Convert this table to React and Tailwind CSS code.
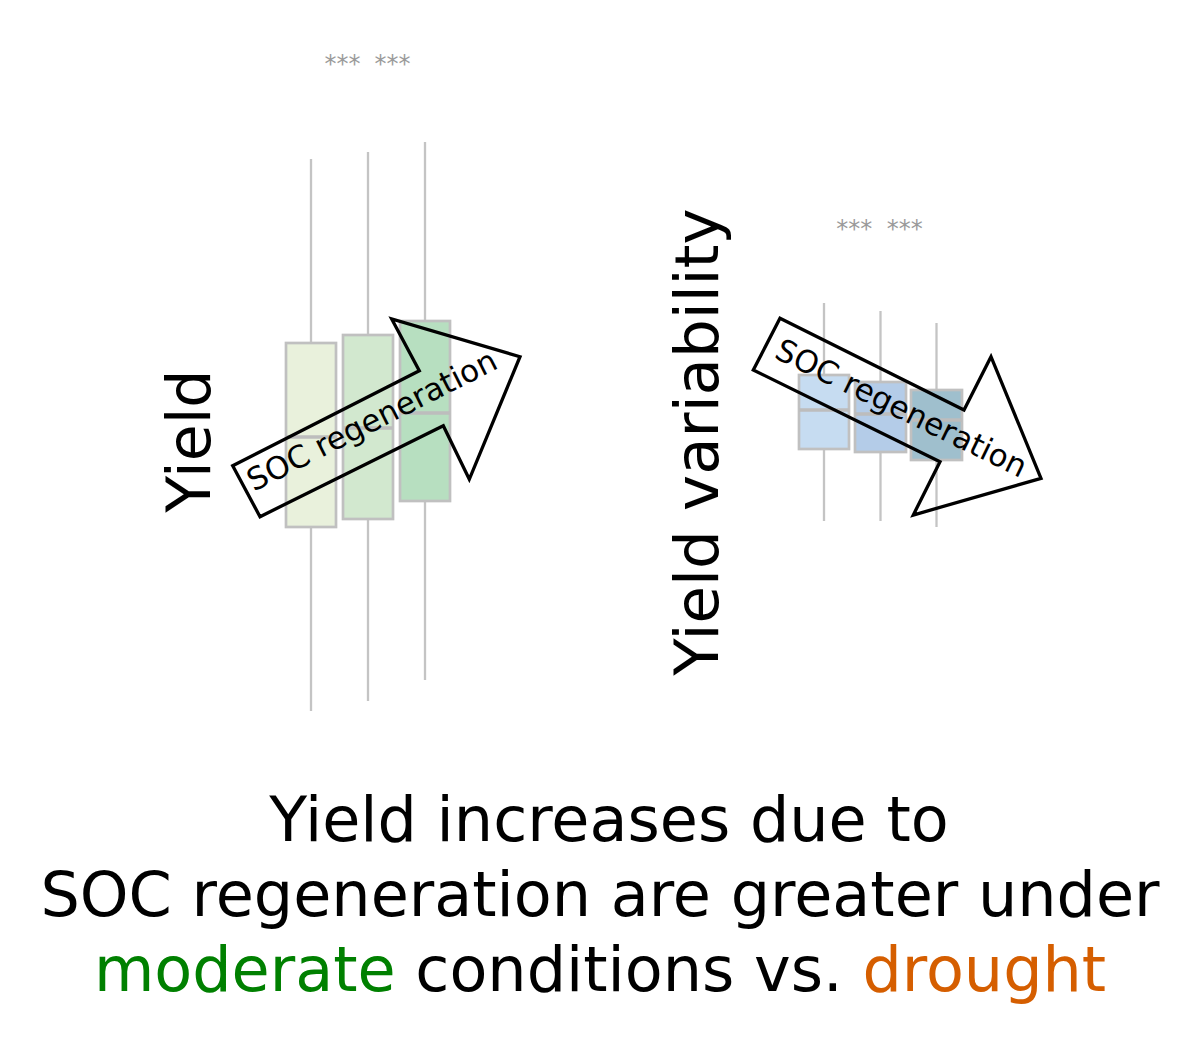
import React from 'react';

const leftBoxes = [
  { x: 286, w: 50, top: 343, bottom: 527, median: 437, wTop: 159, wBottom: 711, fill: '#e9f1dc' },
  { x: 343, w: 50, top: 335, bottom: 519, median: 428, wTop: 152, wBottom: 701, fill: '#d2e8cf' },
  { x: 400, w: 50, top: 321, bottom: 501, median: 413, wTop: 142, wBottom: 680, fill: '#b7dfc0' },
];

const rightBoxes = [
  { x: 799, w: 50, top: 375, bottom: 449, median: 410, wTop: 303, wBottom: 521, fill: '#c6dcf1' },
  { x: 855, w: 51, top: 382, bottom: 452, median: 414, wTop: 311, wBottom: 521, fill: '#b4cce8' },
  { x: 911, w: 51, top: 390, bottom: 460, median: 420, wTop: 323, wBottom: 527, fill: '#9fbfcd' },
];

const Box = ({ b }) => {
  const cx = b.x + b.w / 2;
  return (
    <g>
      <line x1={cx} y1={b.wTop} x2={cx} y2={b.wBottom} stroke="#c4c4c4" strokeWidth="2.3" />
      <rect x={b.x} y={b.top} width={b.w} height={b.bottom - b.top} fill={b.fill} stroke="#c0c0c0" strokeWidth="2.7" />
      <line x1={b.x} y1={b.median} x2={b.x + b.w} y2={b.median} stroke="#bdbdbd" strokeWidth="3.5" />
    </g>
  );
};

const Stars = ({ x, y }) => (
  <text x={x} y={y} textAnchor="middle" fontSize="24" fill="#9a9a9a" fontFamily="'DejaVu Sans', sans-serif">
    ***
  </text>
);

const App = () => {
  return (
    <div className="w-[1200px] h-[1041px] bg-white flex flex-col overflow-hidden font-['DejaVu_Sans',sans-serif]">
      <svg width="1200" height="782" viewBox="0 0 1200 782" className="block shrink-0">
        {/* left panel: yield */}
        <Stars x={342.5} y={72} />
        <Stars x={392.5} y={72} />
        {leftBoxes.map((b, i) => (
          <Box key={i} b={b} />
        ))}
        <polygon
          points="260,516.7 232.7,465.7 419.3,370.7 391.7,319 520,356.7 469.3,479.3 443.3,425.7"
          fill="none"
          stroke="#000"
          strokeWidth="3.3"
        />
        <text
          x="376.7"
          y="429.8"
          textAnchor="middle"
          fontSize="31"
          fill="#000"
          fontFamily="'DejaVu Sans', sans-serif"
          transform="rotate(-26.8 376.7 429.8)"
        >
          SOC regeneration
        </text>
        <text
          x="0"
          y="0"
          textAnchor="middle"
          fontSize="60"
          fill="#000"
          fontFamily="'DejaVu Sans', sans-serif"
          transform="translate(210 441) rotate(-90)"
        >
          Yield
        </text>

        {/* right panel: yield variability */}
        <Stars x={854.2} y={237} />
        <Stars x={904.7} y={237} />
        {rightBoxes.map((b, i) => (
          <Box key={i} b={b} />
        ))}
        <polygon
          points="780,318.3 964,410 991,356.7 1041,478.3 913.3,515 940,461.7 753.3,370"
          fill="none"
          stroke="#000"
          strokeWidth="3.3"
        />
        <text
          x="896.7"
          y="417.7"
          textAnchor="middle"
          fontSize="31"
          fill="#000"
          fontFamily="'DejaVu Sans', sans-serif"
          transform="rotate(26 896.7 417.7)"
        >
          SOC regeneration
        </text>
        <text
          x="0"
          y="0"
          textAnchor="middle"
          fontSize="61"
          fill="#000"
          fontFamily="'DejaVu Sans', sans-serif"
          transform="translate(718 442) rotate(-90)"
        >
          Yield variability
        </text>
      </svg>

      <div className="text-center text-[62px] leading-[75px] text-black">
        <p className="pl-[18px]">Yield increases due to</p>
        <p>SOC regeneration are greater under</p>
        <p>
          <span className="text-[#008000]">moderate</span> conditions vs.{' '}
          <span className="text-[#d55e00]">drought</span>
        </p>
      </div>
    </div>
  );
};

export default App;
